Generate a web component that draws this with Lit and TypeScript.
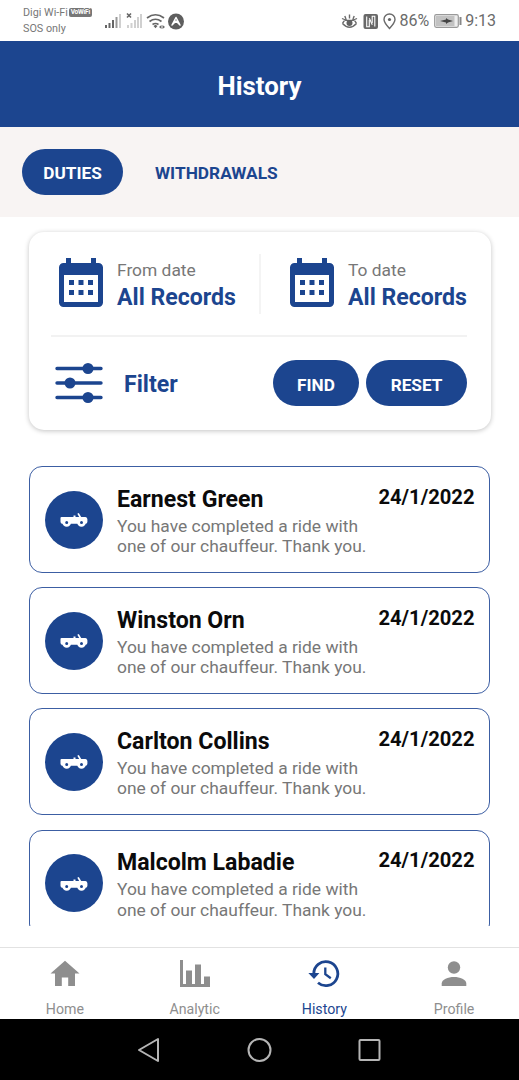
import { LitElement, html, css, svg } from "lit";
import { customElement } from "lit/decorators.js";

const calendar = html`<svg class="cal" width="44" height="49" viewBox="0 0 44 49">
  <path fill="#1c458f" fill-rule="evenodd" d="M7 0h5v5h20V0h5v5h2.500a4.500 4.500 0 0 1 4.500 4.500v35a4.500 4.500 0 0 1-4.500 4.500h-35A4.500 4.500 0 0 1 0 44.500v-35A4.500 4.500 0 0 1 4.500 5H7zM5 17v27h34V17z"/>
  <path fill="#1c458f" d="M10 22h5v5h-5zm9.500 0h5v5h-5zm9.500 0h5v5h-5zM10 32h5v5h-5zm9.500 0h5v5h-5zm9.500 0h5v5h-5z"/>
</svg>`;

const sliders = html`<svg width="47" height="42" viewBox="0 0 47 42">
  <path d="M2 6.500H46M2 21H46M2 35.500H46" stroke="#1c458f" stroke-width="3.400" stroke-linecap="round"/>
  <g fill="#1c458f"><circle cx="33" cy="6.500" r="5.500"/><circle cx="15" cy="21" r="5.500"/><circle cx="33" cy="35.500" r="5.500"/></g>
</svg>`;

const jeep = html`<svg width="28" height="16" viewBox="0 0 28 16">
  <path fill="#fff" d="M1.500 4H13.500V2.600h2V4h3.700L17.300.8l1.500-.8 2.400 4h4.300q1.900.4 1.900 2.200v2.600q0 1.900-1.900 2H2.200Q.6 10.600.5 8.800V5q0-1 1-1z"/>
  <circle cx="6.700" cy="9.500" r="2.900" fill="#1c458f" stroke="#fff" stroke-width="2.800"/>
  <circle cx="21.500" cy="9.500" r="2.900" fill="#1c458f" stroke="#fff" stroke-width="2.800"/>
</svg>`;

const tabs = [
  {
    label: "Home",
    icon: svg`<path fill="currentColor" d="M15 .7 29.500 13.500H25V26h-6.800v-8.500h-6.400V26H5V13.500H.5z"/>`,
  },
  {
    label: "Analytic",
    icon: svg`<path fill="currentColor" d="M0 0h3v24h27v3H0zM6 10.500h6V24H6zM15 4.500h6V24h-6zM24 16.500h6V24h-6z"/>`,
  },
  {
    label: "History",
    icon: svg`<path d="M4.800 14A12 12 0 1 1 9 22.800" fill="none" stroke="currentColor" stroke-width="2.800"/>
      <path fill="currentColor" d="M-.6 13h11L5 19z"/>
      <path d="M16.300 7.500v6.700l5.500 4" fill="none" stroke="currentColor" stroke-width="2.300"/>`,
  },
  {
    label: "Profile",
    icon: svg`<circle cx="15" cy="7.500" r="6.200" fill="currentColor"/><path fill="currentColor" d="M2.700 26v-2.500c0-4.200 6.300-6.600 12.300-6.600s12.300 2.400 12.300 6.600V26z"/>`,
  },
];

@customElement("app-root")
export class AppRoot extends LitElement {
  static styles = css`
    :host { display: flex; flex-direction: column; width: 519px; height: 1080px; overflow: hidden; background: #fff; font-family: Roboto, sans-serif; color: #0b0b0b; }
    * { box-sizing: border-box; }
    svg { display: block; flex: none; overflow: visible; }
    span { white-space: nowrap; }
    .status { height: 41px; display: flex; align-items: center; padding: 0 23px; color: #6b6b6b; flex: none; }
    .carrier { width: 82px; font-size: 10.800px; line-height: 16px; color: #777; }
    .line { display: flex; align-items: center; gap: 1px; }
    .badge { background: #777; color: #fff; font-size: 6.500px; line-height: 9px; border-radius: 2px; font-weight: 700; width: 23px; text-align: center; letter-spacing: -.2px; }
    .right { margin-left: auto; display: flex; align-items: center; font-size: 16px; }
    .right svg:first-child { margin-right: 1px; }
    .head { height: 86px; flex: none; background: #1c458f; color: #fff; display: flex; align-items: center; justify-content: center; font-size: 25.800px; font-weight: 700; padding-top: 3px; }
    .tabs { height: 90px; flex: none; background: #f8f4f3; display: flex; align-items: center; padding-left: 22px; }
    .pill { height: 46px; border-radius: 23px; background: #1c458f; color: #fff; font-size: 17.200px; font-weight: 700; display: flex; align-items: center; justify-content: center; padding-top: 2px; }
    .duties { width: 101px; }
    .other { margin-left: 32px; font-size: 17.300px; font-weight: 700; color: #1c458f; padding-top: 2px; }
    .panel { margin: 15px 28px 0 29px; height: 198px; flex: none; border-radius: 15px; box-shadow: 0 1px 5px rgba(0,0,0,.24); padding: 22px 24px 0 22px; }
    .dates { display: flex; height: 83px; border-bottom: 2px solid #f2f2f2; }
    .date { display: flex; flex: none; width: 210px; height: 60px; padding: 4px 0 0 8px; gap: 14px; border-right: 2px solid #f4f4f4; }
    .date:last-child { border: 0; padding-left: 29px; }
    .stack { display: flex; flex-direction: column; }
    .small { font-size: 17.400px; line-height: 24px; color: #777; }
    .big { font-size: 23.100px; line-height: 30px; font-weight: 700; color: #1c458f; }
    .stack .big { padding-top: 1px; }
    .filter { display: flex; align-items: center; height: 92px; padding-left: 4px; }
    .filter .big { margin-left: 22px; margin-right: auto; padding-top: 4px; }
    .filter .pill { padding-top: 3px; }
    .find { width: 86px; margin-right: 7px; }
    .reset { width: 101px; }
    .list { margin-top: 36px; height: 460px; flex: none; overflow: hidden; padding: 0 29px; display: flex; flex-direction: column; gap: 14.200px; }
    .ride { height: 107px; flex: none; border: 1.500px solid #3c5ea3; border-radius: 13px; display: flex; padding: 0 14.500px 0 15px; }
    .disc { width: 58px; height: 58px; border-radius: 50%; background: #1c458f; align-self: center; display: flex; align-items: center; justify-content: center; margin-right: 14px; padding-top: 3px; }
    .info { padding-top: 17.500px; flex: 1; width: 0; }
    .name { display: block; font-size: 23.100px; line-height: 30px; font-weight: 700; }
    .text { display: block; font-size: 17.420px; line-height: 20.300px; color: #777; margin-top: 1.200px; }
    .when { font-size: 20.200px; line-height: 24px; font-weight: 700; padding-top: 17.500px; }
    .nav { margin-top: 21px; height: 72px; flex: none; border-top: 1px solid #e2e2e2; display: grid; grid-template-columns: repeat(4, 129.750px); overflow: hidden; }
    .item { display: flex; flex-direction: column; align-items: center; color: #8e8e8e; padding-top: 12px; font-size: 14.200px; line-height: 18px; gap: 13px; }
    .on { color: #1c458f; }
    .sys { flex: 1; background: #000; display: flex; align-items: center; justify-content: center; }
  `;

  ride(name: string) {
    return html`<div class="ride">
      <div class="disc">${jeep}</div>
      <div class="info"><span class="name">${name}</span>
        <span class="text">You have completed a ride with<br />one of our chauffeur. Thank you.</span></div>
      <span class="when">24/1/2022</span>
    </div>`;
  }

  date(label: string) {
    return html`<div class="date">${calendar}
      <div class="stack"><span class="small">${label}</span><span class="big">All Records</span></div>
    </div>`;
  }

  render() {
    return html`
      <div class="status">
        <div class="carrier">
          <div class="line"><span>Digi Wi-Fi</span><span class="badge">VoWiFi</span></div>
          <span>SOS only</span>
        </div>
        <svg width="80" height="18" viewBox="0 0 80 18">
          <g fill="#666"><path d="M0 13h2v3H0zM3.500 11h2v5h-2zM7 8h2v8H7z"/><path fill="#999" d="M10.500 5h2v11h-2z"/></g>
          <path fill="#d0d0d0" d="M14 2h2v14h-2zM22 13h2v3h-2zM25.500 11h2v5h-2zM29 8h2v8h-2zM32 5h2v11h-2zM35 2h2v14h-2z"/>
          <path d="m22 1.500 4 4m0-4-4 4" stroke="#666" stroke-width="1.600"/>
          <g fill="none" stroke="#666" stroke-width="1.700"><path d="M42 6q8.500-6.500 17 0M44.500 9.500q6-4.500 12 0M47.500 12.500q3-2 6 0"/></g>
          <path fill="#666" d="m48.500 14 2-1.200 2 1.200-2 2.200zM54 15l2.500-2v4zM60 15l-2.500-2v4z"/>
          <circle cx="71" cy="9.500" r="8" fill="#5e5e5e"/>
          <path d="m67 13 4-7.500 4 7.500-4-4z" fill="#5e5e5e" stroke="#fff" stroke-width="1.500" stroke-linejoin="round"/>
        </svg>
        <div class="right">
          <svg width="57" height="18" viewBox="0 0 57 18">
            <g fill="none" stroke="#6a6a6a" stroke-width="1.400">
              <path d="M1 6.500q7.500 4 15 0M8.500 2.500v4M3.800 4l1.200 3m8.200-3-1.200 3M1.500 11.500q1-2.500 4-4.500m10 4.500q-1-2.500-4-4.500M1.500 11.500q7 7.500 14 0"/>
              <path d="M48.500 16.500q-5.500-6-5.500-9a5.500 5.500 0 0 1 11 0q0 3-5.500 9z"/>
            </g>
            <circle cx="8.500" cy="11" r="3" fill="#626262"/>
            <circle cx="48.500" cy="7.500" r="1.600" fill="#626262"/>
            <rect x="22.500" y="2" width="14.500" height="15" rx="2" fill="#686868"/>
            <path d="M25.700 4.500v10.300h2.600V8M33.800 14.500V4.200h-2.600V11" fill="none" stroke="#fff" stroke-width="1.100"/>
            <path d="M28.300 6.200l3 6.500" stroke="#fff" stroke-width="1.100"/>
          </svg>
          <span>86%</span>
          <svg class="batt" width="36" height="14" viewBox="0 0 36 14">
            <rect x="5.700" y=".7" width="23.600" height="12.600" rx="1.500" fill="#eee" stroke="#999" stroke-width="1.200"/>
            <rect x="7" y="2" width="18.500" height="10" fill="#c2c2c2"/>
            <path d="M11 7l6-1.500V4l2 1.500 5 1.500-5 1.500-2 1.500V8.500z" fill="#444"/>
            <path d="M30.500 3h2v8h-2z" fill="#888"/>
          </svg>
          <span>9:13</span>
        </div>
      </div>
      <div class="head">History</div>
      <div class="tabs"><div class="pill duties">DUTIES</div><span class="other">WITHDRAWALS</span></div>
      <div class="panel">
        <div class="dates">${this.date("From date")}${this.date("To date")}</div>
        <div class="filter">${sliders}<span class="big">Filter</span>
          <div class="pill find">FIND</div><div class="pill reset">RESET</div></div>
      </div>
      <div class="list">${["Earnest Green", "Winston Orn", "Carlton Collins", "Malcolm Labadie"].map((n) => this.ride(n))}</div>
      <div class="nav">${tabs.map((t) => html`<div class="item ${t.label === "History" ? "on" : ""}">
        <svg width="30" height="27" viewBox="0 0 30 27">${t.icon}</svg><span>${t.label}</span></div>`)}</div>
      <div class="sys">
        <svg width="243" height="24" viewBox="0 0 243 24" fill="none" stroke="#b5b5b5" stroke-width="2" stroke-linejoin="round">
          <path d="M1 12 20 1v22z"/><circle cx="121.500" cy="12" r="11"/><rect x="221.500" y="2" width="20" height="20" rx="1"/>
        </svg>
      </div>
    `;
  }
}
